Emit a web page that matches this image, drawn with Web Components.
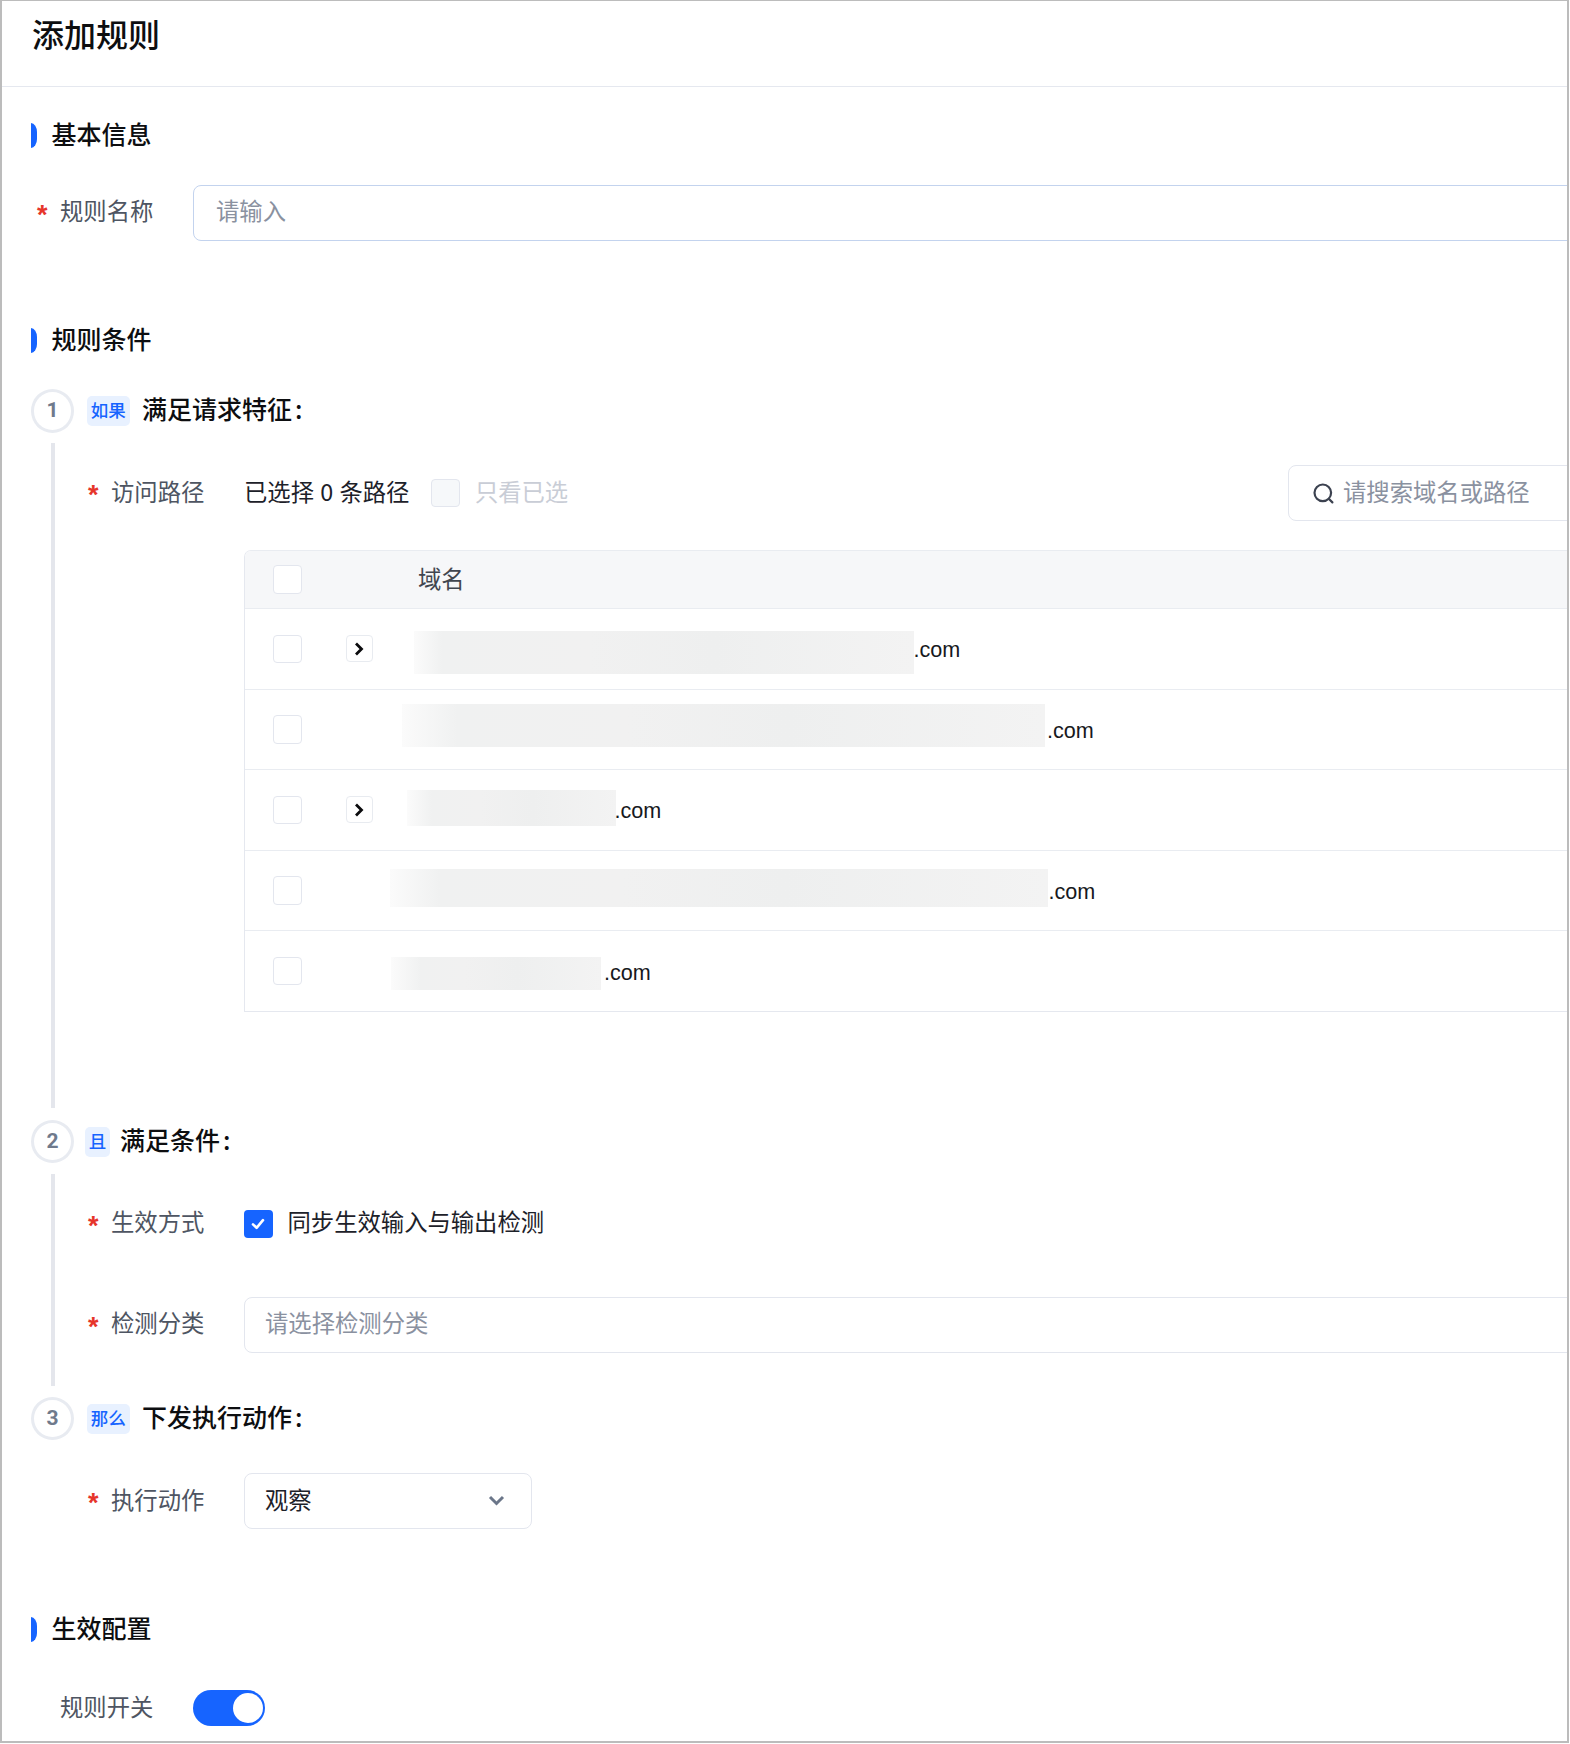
<!DOCTYPE html>
<html lang="zh">
<head>
<meta charset="utf-8">
<title>添加规则</title>
<style>
  html, body { margin: 0; background: #fff; }
  body { font-family: "Noto Sans CJK SC", "Liberation Sans", sans-serif; color: #1d2129; }
</style>
</head>
<body>
<rule-page heading="添加规则">
  <section-title style="margin-top:36px">基本信息</section-title>
  <form-field required label="规则名称" style="margin:37px 0 0 6px;--lift:6px">
    <text-box placeholder="请输入" focused wide></text-box>
  </form-field>

  <section-title style="margin-top:87px">规则条件</section-title>
  <rule-step num="1" badge="如果" heading="满足请求特征" line style="margin-top:36px;--pad-bottom:96px">
    <form-field required label="访问路径" style="--lift:3.5px">
      <path-toolbar count="0"></path-toolbar>
    </form-field>
    <domain-table style="margin-top:29px">
      <domain-row expandable start="41" top="22" width="500" height="43" fade="28" gap="0"></domain-row>
      <domain-row start="29" top="14.7" width="643.5" height="43" fade="55" gap="2"></domain-row>
      <domain-row expandable start="34" top="20" width="209" height="36" fade="25" gap="-1"></domain-row>
      <domain-row start="17" top="18" width="658" height="38" fade="50" gap="1"></domain-row>
      <domain-row start="18" top="26" width="210.5" height="33" fade="30" gap="3"></domain-row>
    </domain-table>
  </rule-step>

  <rule-step num="2" badge="且" heading="满足条件" narrow line style="margin-top:12px;--pad-bottom:33px">
    <form-field required label="生效方式" style="--lift:5.4px">
      <check-box checked></check-box>
      <span style="margin-left:15px;padding-bottom:5.4px;font-size:23.33px;color:#1d2129">同步生效输入与输出检测</span>
    </form-field>
    <form-field required label="检测分类" style="margin-top:45px;--lift:5.4px">
      <text-box placeholder="请选择检测分类" wide></text-box>
    </form-field>
  </rule-step>

  <rule-step num="3" badge="那么" heading="下发执行动作" style="margin-top:11px;--pad-bottom:0px">
    <form-field required label="执行动作" style="--lift:4.5px">
      <select-box value="观察"></select-box>
    </form-field>
  </rule-step>

  <section-title style="margin-top:88px">生效配置</section-title>
  <form-field label="规则开关" style="margin:47px 0 0 6px;--row-h:36px">
    <toggle-switch></toggle-switch>
  </form-field>
</rule-page>

<script>
class RulePage extends HTMLElement {
  constructor() {
    super();
    this.attachShadow({ mode: "open" });
  }

  connectedCallback() {
    this.shadowRoot.innerHTML = /* html */`
    <style>
      :host {
        display: block;
        box-sizing: border-box;
        width: 1569px;
        height: 1743px;
        border: 2px solid #bcbcbc;
        border-top-width: 1px;
        overflow: hidden;
      }
      header {
        box-sizing: border-box;
        height: 86px;
        padding: 10px 0 0 30px;
        border-bottom: 1px solid #e5e8ef;
        font-size: 32px;
        line-height: 44px;
        font-weight: 500;
        color: #0d0e10;
      }
      main { padding-left: 29px; }
    </style>
    <header>${this.getAttribute("heading")}</header>
    <main><slot></slot></main>`;
  }
}

class SectionTitle extends HTMLElement {
  constructor() {
    super();
    this.attachShadow({ mode: "open" });
  }

  connectedCallback() {
    this.shadowRoot.innerHTML = /* html */`
    <style>
      :host {
        display: flex;
        align-items: center;
        gap: 14.5px;
        height: 25px;
        font-size: 25px;
        font-weight: 500;
        color: #0d0e10;
      }
      i {
        width: 6px;
        height: 25px;
        background: #1664ff;
        border-radius: 0 6px 6px 0 / 0 9px 9px 0;
      }
      span { padding-bottom: 5px; }
    </style>
    <i></i><span><slot></slot></span>`;
  }
}

class RuleStep extends HTMLElement {
  constructor() {
    super();
    this.attachShadow({ mode: "open" });
  }

  connectedCallback() {
    const narrow = this.hasAttribute("narrow");
    this.shadowRoot.innerHTML = /* html */`
    <style>
      :host { display: block; }
      .head {
        display: flex;
        align-items: center;
        height: 43.5px;
      }
      .num {
        box-sizing: border-box;
        width: 43px;
        height: 43.5px;
        padding-bottom: 2px;
        display: grid;
        place-items: center;
        border: 3px solid #e8ebf1;
        border-radius: 50%;
        font: 700 21px Roboto, "Liberation Sans", sans-serif;
        color: #6f7a8c;
      }
      .badge {
        box-sizing: border-box;
        margin-left: ${narrow ? 11 : 13}px;
        height: 30px;
        padding: 0 3.75px 2px;
        display: grid;
        place-items: center;
        background: #e8f1ff;
        border-radius: 5px;
        font-size: 17.5px;
        font-weight: 500;
        color: #1664ff;
      }
      .title {
        margin-left: ${narrow ? 10 : 12.5}px;
        padding-bottom: 5px;
        font-size: 25px;
        font-weight: 500;
        color: #0d0e10;
      }
      .title span { margin-left: 3px; }
      .body {
        margin: 10.5px 0 0 20px;
        padding: 22px 0 var(--pad-bottom, 0) 33px;
        border-left: 4px solid ${this.hasAttribute("line") ? "#e4e6ec" : "transparent"};
      }
    </style>
    <div class="head">
      <div class="num">${this.getAttribute("num")}</div>
      <div class="badge">${this.getAttribute("badge")}</div>
      <div class="title">${this.getAttribute("heading")}<span>:</span></div>
    </div>
    <div class="body"><slot></slot></div>`;
  }
}

class FormField extends HTMLElement {
  constructor() {
    super();
    this.attachShadow({ mode: "open" });
  }

  connectedCallback() {
    this.shadowRoot.innerHTML = /* html */`
    <style>
      :host {
        display: flex;
        align-items: center;
        min-height: var(--row-h, 56px);
        font-size: 23.33px;
      }
      .label {
        flex: 0 0 156px;
        display: flex;
        align-items: center;
        color: #4e5562;
      }
      .star {
        width: 23px;
        color: #e6352b;
        font: 700 27px/1 "Liberation Sans", sans-serif;
        padding-top: 5px;
      }
      .text { padding-bottom: var(--lift, 5px); }
      .ctrl {
        flex: 1;
        min-width: 0;
        display: flex;
        align-items: center;
      }
    </style>
    <div class="label">
      <span class="star">${this.hasAttribute("required") ? "*" : ""}</span>
      <span class="text">${this.getAttribute("label")}</span>
    </div>
    <div class="ctrl"><slot></slot></div>`;
  }
}

class TextBox extends HTMLElement {
  constructor() {
    super();
    this.attachShadow({ mode: "open" });
  }

  connectedCallback() {
    const pad = this.hasAttribute("focused") ? 22 : 20;
    this.shadowRoot.innerHTML = /* html */`
    <style>
      :host {
        flex: 1;
        box-sizing: border-box;
        height: 56px;
        margin-right: -20px;
        display: flex;
        align-items: center;
        padding: 0 0 var(--lift, 5px) ${pad}px;
        border: 1.5px solid ${this.hasAttribute("focused") ? "#c3d3ee" : "#e3e6ee"};
        border-radius: 8px;
        font-size: 23.33px;
        color: #8a91a0;
      }
    </style>
    ${this.getAttribute("placeholder")}`;
  }
}

class PathToolbar extends HTMLElement {
  constructor() {
    super();
    this.attachShadow({ mode: "open" });
  }

  connectedCallback() {
    this.shadowRoot.innerHTML = /* html */`
    <style>
      :host {
        flex: 1;
        display: flex;
        align-items: center;
        font-size: 23.33px;
        color: #1d2129;
      }
      span { padding-bottom: 4px; }
      .count { word-spacing: 1px; }
      .only { margin-left: 15px; color: #c9cdd6; }
      check-box { margin-left: 22px; --box-bg: #f6f8fa; }
      .search {
        box-sizing: border-box;
        width: 299px;
        height: 56px;
        margin: 0 -20px 0 auto;
        display: flex;
        align-items: center;
        gap: 9px;
        padding-left: 24px;
        border: 1.5px solid #e3e6ee;
        border-radius: 8px;
        color: #8a91a0;
      }
      .search span { padding-bottom: 5px; }
      svg { display: block; flex: none; }
    </style>
    <span class="count">已选择 ${this.getAttribute("count")} 条路径</span>
    <check-box></check-box>
    <span class="only">只看已选</span>
    <div class="search">
      <svg width="21" height="21" viewBox="0 0 21 21" fill="none" stroke="#3c4250" stroke-width="2.2" stroke-linecap="round">
        <circle cx="9.8" cy="9.8" r="8.3"/>
        <path d="M16 16l3.4 3.4"/>
      </svg>
      <span>请搜索域名或路径</span>
    </div>`;
  }
}

class CheckBox extends HTMLElement {
  constructor() {
    super();
    this.attachShadow({ mode: "open" });
  }

  connectedCallback() {
    const on = this.hasAttribute("checked");
    this.shadowRoot.innerHTML = /* html */`
    <style>
      :host {
        box-sizing: border-box;
        flex: none;
        display: grid;
        place-items: center;
        width: 28.5px;
        height: 28.5px;
        border: ${on ? "0" : "1.5px solid #e3e6ee"};
        border-radius: 4px;
        background: ${on ? "#1664ff" : "var(--box-bg, #fff)"};
      }
      svg { display: block; }
    </style>
    ${on ? `<svg width="14" height="12" viewBox="0 0 14 12" fill="none" stroke="#fff" stroke-width="2.6" stroke-linecap="round" stroke-linejoin="round"><path d="M2 6.4l3.6 3.4L12 2.2"/></svg>` : ""}`;
  }
}

class DomainTable extends HTMLElement {
  constructor() {
    super();
    this.attachShadow({ mode: "open" });
  }

  connectedCallback() {
    this.shadowRoot.innerHTML = /* html */`
    <style>
      :host {
        display: block;
        margin: 0 -20px 0 156px;
        border-left: 1px solid #e5e8ef;
        border-top: 1px solid #e9ecf1;
        border-bottom: 1px solid #e5e8ef;
        border-top-left-radius: 7px;
        overflow: hidden;
      }
      .head {
        box-sizing: border-box;
        height: 58px;
        display: flex;
        align-items: center;
        padding-left: 28px;
        background: #f6f7f9;
        border-bottom: 1px solid #e9ecf1;
        font-size: 23.33px;
        color: #41464f;
      }
      .head span { margin-left: 116.5px; padding-bottom: 3px; }
    </style>
    <div class="head"><check-box></check-box><span>域名</span></div>
    <slot></slot>`;
  }
}

class DomainRow extends HTMLElement {
  constructor() {
    super();
    this.attachShadow({ mode: "open" });
  }

  connectedCallback() {
    const attr = (n) => this.getAttribute(n);
    this.shadowRoot.innerHTML = /* html */`
    <style>
      :host {
        box-sizing: border-box;
        height: 80.6px;
        display: flex;
        align-items: center;
        padding-left: 28px;
        border-bottom: 1px solid #e9ecf1;
        font: 21.6px "Liberation Sans", sans-serif;
        color: #17191d;
      }
      :host(:last-child) { border-bottom: 0; height: 79.6px; }
      .slot { flex: none; width: 27px; margin-left: 44px; }
      .expand {
        box-sizing: border-box;
        width: 27px;
        height: 27px;
        display: grid;
        place-items: center;
        border: 1.5px solid #e8ebf0;
        border-radius: 4px;
      }
      .blur {
        align-self: flex-start;
        flex: none;
        margin: ${attr("top")}px 0 0 ${attr("start")}px;
        width: ${attr("width")}px;
        height: ${attr("height")}px;
        background: linear-gradient(90deg, #fbfbfb, #f0f1f1 ${attr("fade")}px, #f1f1f1 35%, #eeefef 60%, #f3f3f3);
      }
      .tld { margin: 3px 0 0 ${attr("gap")}px; }
      svg { display: block; }
    </style>
    <check-box></check-box>
    <div class="slot">
      ${this.hasAttribute("expandable") ? `<div class="expand"><svg width="10" height="14" viewBox="0 0 10 14" fill="none" stroke="#0b0b0d" stroke-width="2.8"><path d="M2 1.5L7.5 7 2 12.5"/></svg></div>` : ""}
    </div>
    <div class="blur"></div>
    <span class="tld">.com</span>`;
  }
}

class SelectBox extends HTMLElement {
  constructor() {
    super();
    this.attachShadow({ mode: "open" });
  }

  connectedCallback() {
    this.shadowRoot.innerHTML = /* html */`
    <style>
      :host {
        box-sizing: border-box;
        width: 288px;
        height: 56px;
        display: flex;
        align-items: center;
        justify-content: space-between;
        padding: 0 26px 0 20px;
        border: 1.5px solid #e3e6ee;
        border-radius: 8px;
        font-size: 23.33px;
        color: #1d2129;
      }
      span { padding-bottom: 4.5px; }
      svg { display: block; }
    </style>
    <span>${this.getAttribute("value")}</span>
    <svg width="17" height="11" viewBox="0 0 17 11" fill="none" stroke="#6b7689" stroke-width="3"><path d="M2 2l6.5 6.5L15 2"/></svg>`;
  }
}

class ToggleSwitch extends HTMLElement {
  constructor() {
    super();
    this.attachShadow({ mode: "open" });
  }

  connectedCallback() {
    this.shadowRoot.innerHTML = /* html */`
    <style>
      :host {
        box-sizing: border-box;
        width: 72px;
        height: 36px;
        display: flex;
        align-items: center;
        justify-content: flex-end;
        padding-right: 2.5px;
        background: #1664ff;
        border-radius: 18px;
      }
      i { width: 30px; height: 30px; background: #fff; border-radius: 50%; }
    </style>
    <i></i>`;
  }
}

customElements.define("rule-page", RulePage);
customElements.define("section-title", SectionTitle);
customElements.define("rule-step", RuleStep);
customElements.define("form-field", FormField);
customElements.define("text-box", TextBox);
customElements.define("path-toolbar", PathToolbar);
customElements.define("check-box", CheckBox);
customElements.define("domain-table", DomainTable);
customElements.define("domain-row", DomainRow);
customElements.define("select-box", SelectBox);
customElements.define("toggle-switch", ToggleSwitch);
</script>
</body>
</html>
